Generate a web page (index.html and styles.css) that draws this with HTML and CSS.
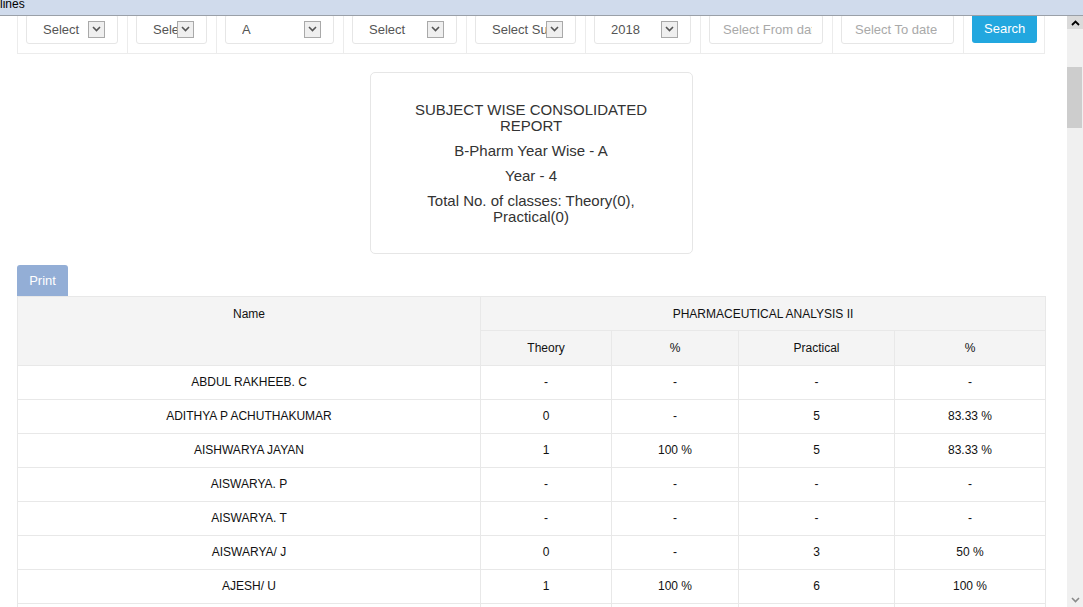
FILE: index.html
```html
<!DOCTYPE html>
<html>
<head>
<meta charset="utf-8">
<title>Subject Wise Consolidated Report</title>
<link rel="stylesheet" href="styles.css">
</head>
<body>
<div class="topbar">lines</div>
<div class="viewport">
  <main class="page">
    <div class="filters">
      <div class="fcell w1"><div class="sel"><span class="sel-text">Select</span><span class="sel-arrow"><svg width="9" height="6" viewBox="0 0 9 6"><path d="M1 1 L4.5 4.5 L8 1" fill="none" stroke="#555" stroke-width="1.6"/></svg></span></div></div>
      <div class="fcell w2"><div class="sel"><span class="sel-text">Select</span><span class="sel-arrow"><svg width="9" height="6" viewBox="0 0 9 6"><path d="M1 1 L4.5 4.5 L8 1" fill="none" stroke="#555" stroke-width="1.6"/></svg></span></div></div>
      <div class="fcell w3"><div class="sel"><span class="sel-text">A</span><span class="sel-arrow"><svg width="9" height="6" viewBox="0 0 9 6"><path d="M1 1 L4.5 4.5 L8 1" fill="none" stroke="#555" stroke-width="1.6"/></svg></span></div></div>
      <div class="fcell w4"><div class="sel"><span class="sel-text">Select</span><span class="sel-arrow"><svg width="9" height="6" viewBox="0 0 9 6"><path d="M1 1 L4.5 4.5 L8 1" fill="none" stroke="#555" stroke-width="1.6"/></svg></span></div></div>
      <div class="fcell w5"><div class="sel"><span class="sel-text">Select Subject</span><span class="sel-arrow"><svg width="9" height="6" viewBox="0 0 9 6"><path d="M1 1 L4.5 4.5 L8 1" fill="none" stroke="#555" stroke-width="1.6"/></svg></span></div></div>
      <div class="fcell w6"><div class="sel"><span class="sel-text">2018</span><span class="sel-arrow"><svg width="9" height="6" viewBox="0 0 9 6"><path d="M1 1 L4.5 4.5 L8 1" fill="none" stroke="#555" stroke-width="1.6"/></svg></span></div></div>
      <div class="fcell w7"><div class="inp"><span class="ph">Select From date</span></div></div>
      <div class="fcell w8"><div class="inp"><span class="ph">Select To date</span></div></div>
      <div class="fcell w9"><button class="btn-search">Search</button></div>
    </div>

    <div class="card">
      <p class="title">SUBJECT WISE CONSOLIDATED REPORT</p>
      <p>B-Pharm Year Wise - A</p>
      <p>Year - 4</p>
      <p>Total No. of classes: Theory(0), Practical(0)</p>
    </div>

    <button class="btn-print">Print</button>

    <table class="report">
      <colgroup>
        <col class="c-name"><col class="c-th"><col class="c-p1"><col class="c-pr"><col class="c-p2">
      </colgroup>
      <thead>
        <tr class="h1"><th rowspan="2" class="name-head">Name</th><th colspan="4">PHARMACEUTICAL ANALYSIS II</th></tr>
        <tr class="h2"><th>Theory</th><th>%</th><th>Practical</th><th>%</th></tr>
      </thead>
      <tbody>
        <tr><td>ABDUL RAKHEEB. C</td><td>-</td><td>-</td><td>-</td><td>-</td></tr>
        <tr><td>ADITHYA P ACHUTHAKUMAR</td><td>0</td><td>-</td><td>5</td><td>83.33 %</td></tr>
        <tr><td>AISHWARYA JAYAN</td><td>1</td><td>100 %</td><td>5</td><td>83.33 %</td></tr>
        <tr><td>AISWARYA. P</td><td>-</td><td>-</td><td>-</td><td>-</td></tr>
        <tr><td>AISWARYA. T</td><td>-</td><td>-</td><td>-</td><td>-</td></tr>
        <tr><td>AISWARYA/ J</td><td>0</td><td>-</td><td>3</td><td>50 %</td></tr>
        <tr><td>AJESH/ U</td><td>1</td><td>100 %</td><td>6</td><td>100 %</td></tr>
        <tr><td>AKHIL. K</td><td>-</td><td>-</td><td>-</td><td>-</td></tr>
      </tbody>
    </table>
  </main>
  <div class="scrollbar">
    <div class="sb-up"><svg width="9" height="6" viewBox="0 0 9 6"><path d="M1 5 L4.5 1.5 L8 5" fill="none" stroke="#000" stroke-width="1.8"/></svg></div>
    <div class="sb-gap"></div>
    <div class="sb-thumb"></div>
    <div class="sb-track"></div>
    <div class="sb-down"><svg width="9" height="6" viewBox="0 0 9 6"><path d="M1 1 L4.5 4.5 L8 1" fill="none" stroke="#8a8a8a" stroke-width="1.6"/></svg></div>
  </div>
</div>
</body>
</html>
```

FILE: styles.css
```css
* { box-sizing: border-box; }
html, body {
  margin: 0;
  padding: 0;
  height: 100%;
  overflow: hidden;
  background: #fff;
  font-family: "Liberation Sans", Arial, sans-serif;
}
body {
  display: flex;
  flex-direction: column;
}
.topbar {
  height: 16px;
  flex: none;
  background: #d0dbec;
  border-bottom: 1px solid #9aa0a8;
  font-size: 12px;
  line-height: 9px;
  color: #000;
  padding-left: 0;
  overflow: hidden;
}
.viewport {
  flex: 1;
  display: flex;
  overflow: hidden;
}
.page {
  flex: 1;
  overflow: hidden;
  padding: 0 22px 0 17px;
}

/* filter row */
.filters {
  display: flex;
  margin-top: -11px;
  border-bottom: 1px solid #ececec;
}
.fcell {
  border-left: 1px solid #ececec;
  padding: 9px 9px 9px 8px;
  flex: none;
}
.fcell.w1 { width: 110px; }
.fcell.w2 { width: 89px; }
.fcell.w3 { width: 127px; }
.fcell.w4 { width: 123px; }
.fcell.w5 { width: 119px; }
.fcell.w6 { width: 115px; }
.fcell.w7 { width: 132px; }
.fcell.w8 { width: 131px; }
.fcell.w9 { width: 82px; border-right: 1px solid #ececec; }

.sel, .inp {
  height: 30px;
  border: 1px solid #e6e6e6;
  border-radius: 3px;
  display: flex;
  align-items: center;
  font-size: 13px;
  color: #555;
  background: #fff;
}
.sel { padding: 0 12px 0 16px; }
.sel-text {
  flex: 1;
  min-width: 0;
  overflow: hidden;
  white-space: nowrap;
}
.sel-arrow {
  flex: none;
  width: 17px;
  height: 17px;
  border: 1px solid #a9a9a9;
  background: #efefef;
  display: flex;
  align-items: center;
  justify-content: center;
}
.inp { padding: 0 10px 0 13px; }
.ph {
  color: #a9a9a9;
  white-space: nowrap;
  overflow: hidden;
}
.btn-search {
  height: 30px;
  border: none;
  border-radius: 3px;
  background: #22a7df;
  color: #fff;
  font-family: "Liberation Sans", Arial, sans-serif;
  font-size: 13px;
  padding: 0 12px;
  margin-top: -1px;
}

/* report card */
.card {
  width: 323px;
  margin: 18px auto 0;
  border: 1px solid #e6e6e6;
  border-radius: 5px;
  padding: 29px 25px 28px;
  text-align: center;
  color: #333;
  font-size: 15px;
  line-height: 16px;
}
.card p { margin: 9px 0 0; }
.card p.title { margin-top: 0; }

.btn-print {
  display: block;
  margin-top: 11px;
  height: 31px;
  width: 51px;
  border: none;
  border-radius: 3px 3px 0 0;
  background: #93aed6;
  color: #fff;
  font-family: "Liberation Sans", Arial, sans-serif;
  font-size: 13px;
  padding: 0;
}

/* table */
.report {
  width: 1028px;
  table-layout: fixed;
  border-collapse: collapse;
  font-size: 12px;
  color: #111;
}
.c-name { width: 463px; }
.c-th { width: 131px; }
.c-p1 { width: 127px; }
.c-pr { width: 156px; }
.c-p2 { width: 151px; }
.report th, .report td {
  border: 1px solid #e8e8e8;
  padding: 10px 6px;
  line-height: 13px;
  text-align: center;
  white-space: nowrap;
  overflow: hidden;
}
.report th {
  background: #f4f4f4;
  font-weight: normal;
}
.report .h1 th { padding: 11px 6px 9px; }
.report .h2 th { padding: 11px 6px 10px; }
.report th.name-head { vertical-align: top; }

/* scrollbar */
.scrollbar {
  width: 16px;
  flex: none;
  background: #f0f0f0;
  display: flex;
  flex-direction: column;
}
.sb-up {
  height: 13px;
  background: #dadada;
  display: flex;
  align-items: center;
  justify-content: center;
}
.sb-gap { height: 38px; }
.sb-thumb {
  height: 61px;
  background: #cdcdcd;
  margin-right: 1px;
}
.sb-track { flex: 1; }
.sb-down {
  height: 14px;
  display: flex;
  align-items: center;
  justify-content: center;
}
```
